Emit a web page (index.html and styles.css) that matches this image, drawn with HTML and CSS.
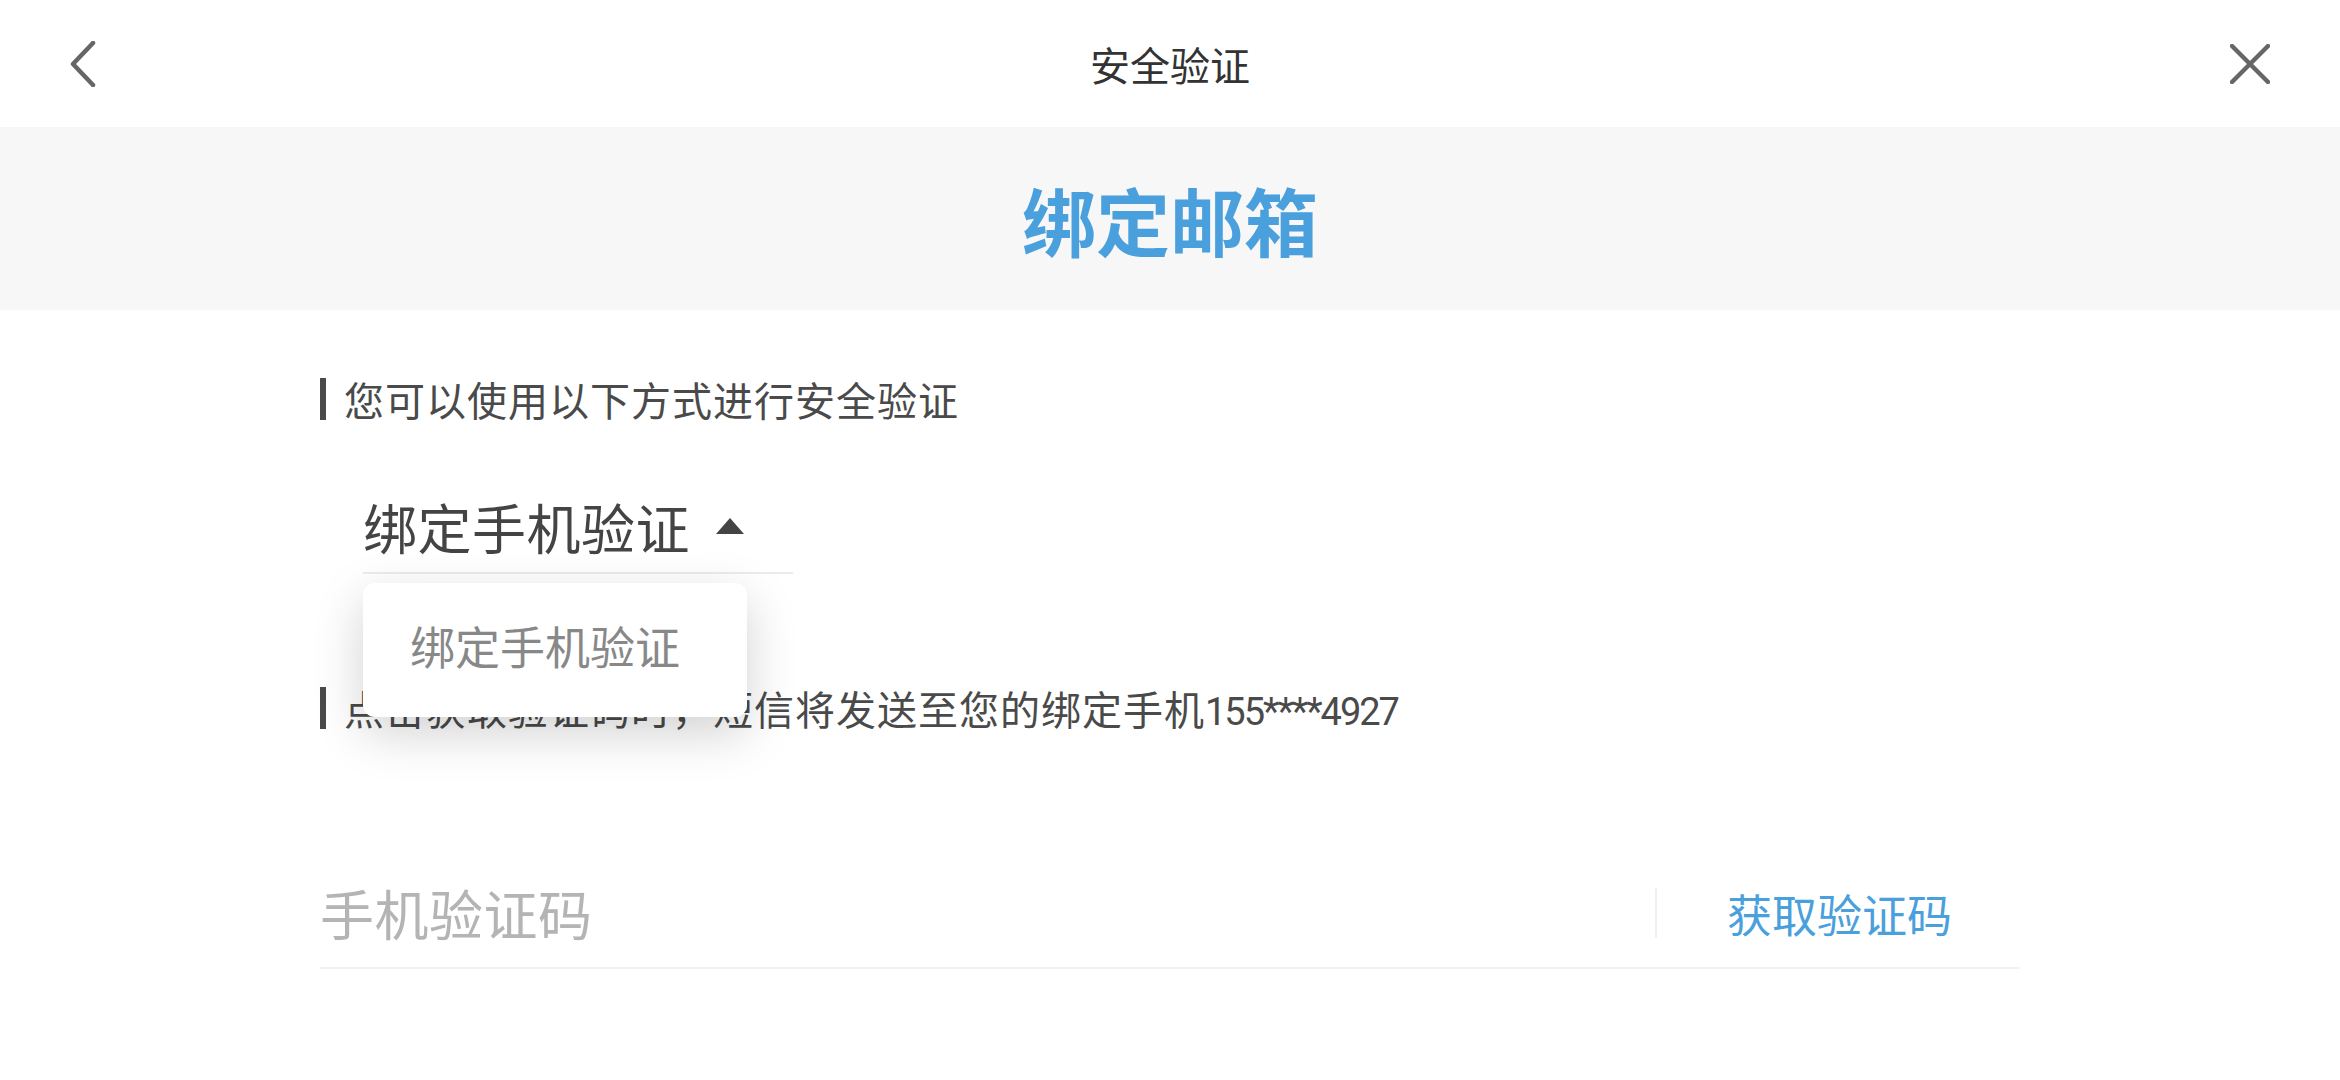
FILE: index.html
```html
<!DOCTYPE html>
<html lang="zh-CN">

<head>
    <meta charset="UTF-8">
    <meta name="viewport" content="width=device-width, initial-scale=1.0">
    <title>安全验证</title>
    <link rel="stylesheet" href="styles.css">
</head>

<body>
    <!-- Barra superior -->
    <header class="topbar">
        <button class="icon-btn back" aria-label="返回">
            <svg width="26" height="46" viewBox="0 0 26 46">
                <polyline points="23,2 3,23 23,44" />
            </svg>
        </button>
        <div class="topbar-title">安全验证</div>
        <button class="icon-btn close" aria-label="关闭">
            <svg width="40" height="40" viewBox="0 0 40 40">
                <line x1="2" y1="2" x2="38" y2="38" />
                <line x1="38" y1="2" x2="2" y2="38" />
            </svg>
        </button>
    </header>

    <div class="banner">
        <h1>绑定邮箱</h1>
    </div>

    <main class="content">
        <p class="tip"><span>您可以使用以下方式进行安全验证</span></p>

        <!-- Seletor do método -->
        <div class="picker">
            <div class="picker-value">绑定手机验证<span class="caret"></span></div>
            <ul class="picker-menu">
                <li>绑定手机验证</li>
            </ul>
        </div>

        <p class="tip"><span>点击获取验证码时，短信将发送至您的绑定手机<span class="phone">155****4927</span></span></p>

        <div class="code-row">
            <input type="text" class="code-input" placeholder="手机验证码">
            <span class="sep"></span>
            <button class="get-code">获取验证码</button>
        </div>
    </main>
</body>

</html>
```

FILE: styles.css
```css
* {
    margin: 0;
    padding: 0;
    box-sizing: border-box;
}

body {
    font-family: Roboto, "Noto Sans CJK SC", sans-serif;
    background: #fff;
    color: #333;
    width: 2340px;
    height: 1080px;
    overflow: hidden;
}

/* Barra superior */
.topbar {
    height: 127px;
    display: grid;
    grid-template-columns: 1fr auto 1fr;
    align-items: center;
    padding: 0 70px;
}

.icon-btn {
    background: none;
    border: none;
    display: flex;
    align-items: center;
}

.icon-btn svg {
    stroke: #666;
    stroke-width: 4.5;
    stroke-linecap: round;
    stroke-linejoin: round;
    fill: none;
}

.back {
    justify-self: start;
}

.close {
    justify-self: end;
}

.topbar-title {
    font-size: 40px;
    color: #333;
}

/* Faixa do título */
.banner {
    height: 183px;
    background: #f7f7f7;
    display: flex;
    align-items: center;
    justify-content: center;
}

.banner h1 {
    font-size: 74px;
    font-weight: 700;
    color: #4aa0dc;
}

/* Conteúdo */
.content {
    width: 1700px;
    margin: 0 auto;
}

.tip {
    display: flex;
    align-items: center;
    gap: 18px;
    height: 42px;
    font-size: 40px;
    letter-spacing: 1px;
    color: #4a4a4a;
    white-space: nowrap;
}

.tip::before {
    content: "";
    width: 6px;
    height: 42px;
    background: #4a4a4a;
    flex: none;
}

.phone {
    font-size: 38px;
    letter-spacing: -2px;
}

.content .tip:first-child {
    margin-top: 68px;
}

.picker {
    position: relative;
    margin: 62px 0 0 43px;
    width: 430px;
}

.picker-value {
    height: 92px;
    display: flex;
    align-items: center;
    font-size: 54px;
    letter-spacing: 0.5px;
    color: #444;
    border-bottom: 2px solid #ececec;
    padding-bottom: 2px;
}

.caret {
    width: 0;
    height: 0;
    margin-left: 26px;
    border-left: 14px solid transparent;
    border-right: 14px solid transparent;
    border-bottom: 16px solid #444;
}

.picker-menu {
    list-style: none;
    position: absolute;
    top: calc(100% + 9px);
    left: 0;
    width: 384px;
    height: 134px;
    background: #fff;
    border-radius: 12px;
    box-shadow: 0 16px 50px rgba(0, 0, 0, 0.18);
    display: flex;
    align-items: center;
    padding: 0 0 10px 47px;
    z-index: 2;
}

.picker-menu li {
    font-size: 45px;
    color: #888;
}

.picker + .tip {
    margin-top: 113px;
}

/* Linha do código */
.code-row {
    margin-top: 130px;
    height: 110px;
    display: flex;
    align-items: center;
    border-bottom: 2px solid #f2f2f2;
}

.code-input {
    flex: 1;
    border: none;
    outline: none;
    font-family: inherit;
    font-size: 54px;
    letter-spacing: 0.5px;
    color: #333;
    background: transparent;
    padding-top: 8px;
}

.code-input::placeholder {
    color: #b4b4b4;
}

.sep {
    width: 2px;
    height: 50px;
    background: #f0f0f0;
}

.get-code {
    background: none;
    border: none;
    font-family: inherit;
    font-size: 45px;
    color: #4aa0dc;
    padding: 0 68px 0 70px;
}
```
